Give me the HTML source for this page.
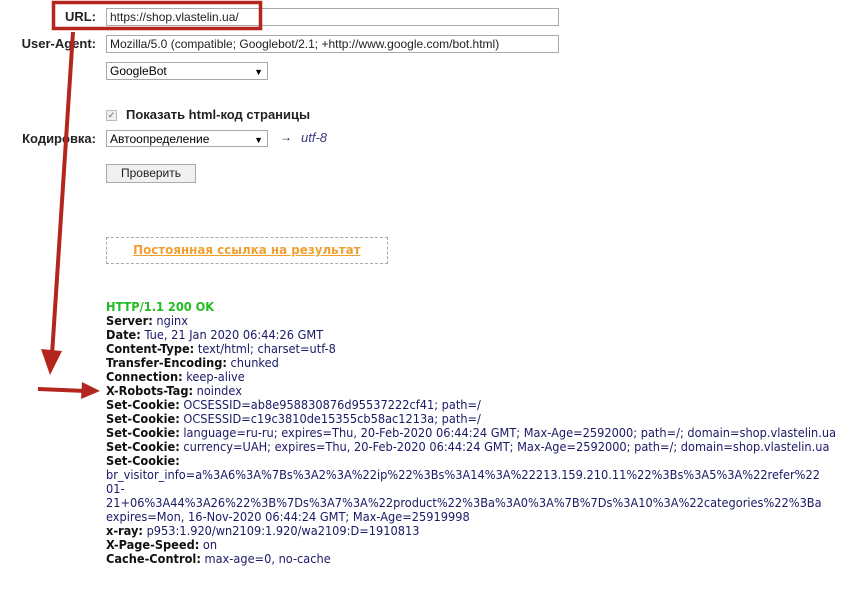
<!DOCTYPE html>
<html><head><meta charset="utf-8"><style>
body{margin:0;background:#fff;width:862px;height:589px;overflow:hidden;position:relative;font-family:"Liberation Sans",Arial,sans-serif;}
.a{position:absolute}
.lbl{font-weight:bold;font-size:13px;color:#222;text-align:right;width:96px;left:0}
.inp{border:1px solid #a9a9a9;background:#fff;font-size:12px;color:#222;box-sizing:border-box;padding:1px 3px;line-height:14px}
.sel{border:1px solid #a9a9a9;font-size:12px;box-sizing:border-box;padding:1px 3px;line-height:14px}
.sel:after{content:"▼";position:absolute;right:4px;top:2px;font-size:9px}
.hd{left:106px;top:300px;font-family:"DejaVu Sans",Verdana,sans-serif;font-size:12.5px;line-height:14px;color:#1a1a66;transform:scaleX(0.91);transform-origin:0 0;white-space:nowrap}
.hd b{color:#111}
</style></head><body>
<div class="a lbl" style="top:9px">URL:</div>
<div class="a inp" style="left:106px;top:8px;width:453px;height:18px">https://shop.vlastelin.ua/</div>
<div class="a lbl" style="top:36px">User-Agent:</div>
<div class="a inp" style="left:106px;top:35px;width:453px;height:18px">Mozilla/5.0 (compatible; Googlebot/2.1; +http://www.google.com/bot.html)</div>
<div class="a sel" style="left:106px;top:62px;width:162px;height:18px">GoogleBot</div>
<div class="a" style="left:106px;top:110px;width:9px;height:9px;border:1px solid #bbb;background:#eee;font-size:9px;line-height:9px;color:#666;text-align:center">✓</div>
<div class="a" style="left:126px;top:107px;font-size:13px;font-weight:bold;color:#222">Показать html-код страницы</div>
<div class="a lbl" style="top:131px">Кодировка:</div>
<div class="a sel" style="left:106px;top:130px;width:162px;height:17px">Автоопределение</div>
<div class="a" style="left:280px;top:130px;font-size:12px;color:#222">→</div>
<div class="a" style="left:301px;top:130px;font-size:13px;font-style:italic;color:#3a3a80">utf-8</div>
<div class="a" style="left:106px;top:164px;width:90px;height:19px;border:1px solid #aaa;background:#f0f0f0;box-sizing:border-box;font-size:12px;text-align:center;line-height:17px;color:#222">Проверить</div>
<div class="a" style="left:106px;top:237px;width:282px;height:27px;border:1px dashed #aaa;box-sizing:border-box;text-align:center;line-height:25px;font-family:'DejaVu Sans',Verdana,sans-serif;font-size:12px;font-weight:bold;color:#f0a030"><span style="display:inline-block;transform:scaleX(0.99);text-decoration:underline">Постоянная ссылка на результат</span></div>
<div class="a hd">
<div style="color:#22bb22;font-weight:bold">HTTP/1.1 200 OK</div>
<div><b>Server:</b> nginx</div>
<div><b>Date:</b> Tue, 21 Jan 2020 06:44:26 GMT</div>
<div><b>Content-Type:</b> text/html; charset=utf-8</div>
<div><b>Transfer-Encoding:</b> chunked</div>
<div><b>Connection:</b> keep-alive</div>
<div><b>X-Robots-Tag:</b> noindex</div>
<div><b>Set-Cookie:</b> OCSESSID=ab8e958830876d95537222cf41; path=/</div>
<div><b>Set-Cookie:</b> OCSESSID=c19c3810de15355cb58ac1213a; path=/</div>
<div><b>Set-Cookie:</b> language=ru-ru; expires=Thu, 20-Feb-2020 06:44:24 GMT; Max-Age=2592000; path=/; domain=shop.vlastelin.ua</div>
<div><b>Set-Cookie:</b> currency=UAH; expires=Thu, 20-Feb-2020 06:44:24 GMT; Max-Age=2592000; path=/; domain=shop.vlastelin.ua</div>
<div><b>Set-Cookie:</b></div>
<div>br_visitor_info=a%3A6%3A%7Bs%3A2%3A%22ip%22%3Bs%3A14%3A%22213.159.210.11%22%3Bs%3A5%3A%22refer%22</div>
<div>01-</div>
<div>21+06%3A44%3A26%22%3B%7Ds%3A7%3A%22product%22%3Ba%3A0%3A%7B%7Ds%3A10%3A%22categories%22%3Ba</div>
<div>expires=Mon, 16-Nov-2020 06:44:24 GMT; Max-Age=25919998</div>
<div><b>x-ray:</b> p953:1.920/wn2109:1.920/wa2109:D=1910813</div>
<div><b>X-Page-Speed:</b> on</div>
<div><b>Cache-Control:</b> max-age=0, no-cache</div>
</div>
<svg class="a" style="left:0;top:0" width="862" height="589">
<rect x="53.5" y="2.5" width="207" height="26" fill="none" stroke="#b3261e" stroke-width="3.5"/>
<line x1="73" y1="32" x2="52" y2="355" stroke="#b3261e" stroke-width="4"/>
<polygon points="41,349 62,351 50,375" fill="#b3261e"/>
<line x1="38" y1="389" x2="86" y2="391" stroke="#b3261e" stroke-width="4"/>
<polygon points="82,382 100,391 81,399" fill="#b3261e"/>
</svg>
</body></html>
